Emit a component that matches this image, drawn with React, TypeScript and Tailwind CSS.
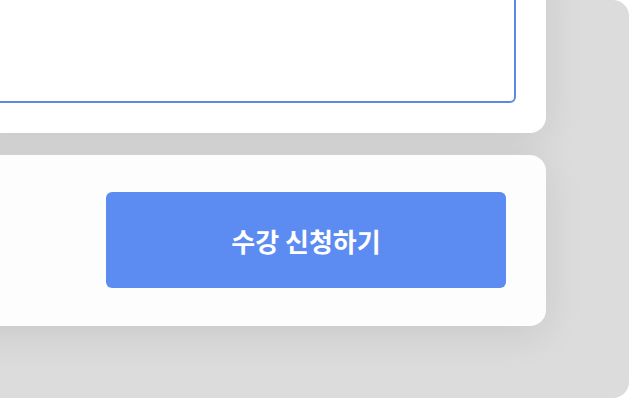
export default function App() {
  return (
    <div className="w-[630px] h-[400px] overflow-hidden bg-white">
      <div className="w-[629px] h-[398px] rounded-r-2xl bg-[#dcdcdc] overflow-hidden">
        <div className="flex flex-col gap-[22px] pr-[83px] -mt-[40px] -ml-[40px]">
          <div className="h-[173px] rounded-r-2xl bg-white p-[30px] pl-0 shadow-[0_8px_40px_rgba(0,0,0,0.09)]">
            <div className="h-full rounded-md border-2 border-[#5b8be0] bg-white" />
          </div>
          <div className="h-[171px] rounded-r-2xl bg-[#fdfdfd] py-[37px] pr-[40px] pl-[146px] shadow-[0_8px_40px_rgba(0,0,0,0.09)]">
            <button className="w-full h-[96px] rounded-md bg-[#5c8cf2] text-white text-[26px] font-bold font-['Noto_Sans_CJK_KR',sans-serif]">
              수강 신청하기
            </button>
          </div>
        </div>
      </div>
    </div>
  );
}
